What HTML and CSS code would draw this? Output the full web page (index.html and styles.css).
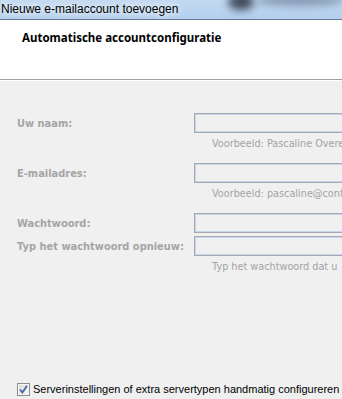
FILE: index.html
```html
<!DOCTYPE html>
<html lang="nl">
<head>
    <meta charset="UTF-8">
    <title>Nieuwe e-mailaccount toevoegen</title>
    <link rel="stylesheet" href="styles.css">
</head>
<body>
    <div class="titlebar">
        <span class="window-title">Nieuwe e-mailaccount toevoegen</span>
        <span class="blur blur-one"></span>
        <span class="blur blur-two"></span>
    </div>

    <div class="header">
        <h1>Automatische accountconfiguratie</h1>
    </div>

    <div class="form">
        <div class="row">
            <label>Uw naam:</label>
            <div class="field"></div>
        </div>
        <div class="hint">Voorbeeld: Pascaline Overe</div>

        <div class="row spaced">
            <label>E-mailadres:</label>
            <div class="field"></div>
        </div>
        <div class="hint">Voorbeeld: pascaline@cont</div>

        <div class="row spaced">
            <label>Wachtwoord:</label>
            <div class="field"></div>
        </div>
        <div class="row tight">
            <label>Typ het wachtwoord opnieuw:</label>
            <div class="field"></div>
        </div>
        <div class="hint">Typ het wachtwoord dat u</div>
    </div>

    <div class="manual">
        <span class="checkbox">
            <svg width="9" height="9" viewBox="0 0 9 9">
                <path d="M1 4.5 L3.4 7.5 L8 0.8" fill="none" stroke="#4b64a8" stroke-width="1.8"/>
            </svg>
        </span>
        <span class="manual-text">Serverinstellingen of extra servertypen handmatig configureren</span>
    </div>
</body>
</html>
```

FILE: styles.css
```css
html, body {
    margin: 0;
    padding: 0;
}
body {
    width: 342px;
    height: 399px;
    overflow: hidden;
    background: #f0f0f0;
    font-family: "Liberation Sans", sans-serif;
}
.titlebar {
    position: relative;
    height: 19px;
    background: linear-gradient(to bottom, #c4daf1, #b3cfee);
    border-bottom: 1px solid #67788f;
    overflow: hidden;
}
.window-title {
    position: relative;
    z-index: 1;
    display: block;
    font-size: 12px;
    line-height: 18px;
    color: #000;
    text-shadow: 0 0 6px #fff, 0 0 8px #fff;
    white-space: nowrap;
    margin-left: 1px;
}
.blur {
    position: absolute;
    top: -6px;
    border-radius: 50%;
    filter: blur(4px);
}
.blur-one {
    left: 228px;
    width: 26px;
    height: 16px;
    background: #3c4658;
}
.blur-two {
    left: 255px;
    width: 90px;
    height: 12px;
    background: #8296b0;
}
.header {
    background: #fff;
    height: 60px;
    border-bottom: 1px solid #a0a0a0;
    box-shadow: 0 1px 0 #fff;
    box-sizing: border-box;
    padding: 10px 0 0 22px;
}
.header h1 {
    margin: 0;
    font-family: "Noto Sans", sans-serif;
    font-size: 11.5px;
    line-height: 16px;
    font-weight: bold;
    color: #000;
    white-space: nowrap;
}
.form {
    padding-top: 33px;
}
.row {
    display: flex;
    align-items: center;
    height: 20px;
}
.row.spaced {
    margin-top: 13px;
}
.row.tight {
    margin-top: 3px;
}
.row label {
    width: 194px;
    padding-left: 17px;
    flex-shrink: 0;
    box-sizing: border-box;
    font-family: "DejaVu Sans", sans-serif;
    font-size: 9.9px;
    font-weight: bold;
    color: #a5a5a5;
    white-space: nowrap;
}
.field {
    width: 148px;
    height: 20px;
    flex-shrink: 0;
    box-sizing: border-box;
    border: 1px solid #a6a8ae;
    border-right: none;
    box-shadow: inset 1px 1px 0 #c2d6ed, inset 0 -1px 0 #c2d6ed;
    background: #f0f0f0;
}
.hint {
    padding-left: 212px;
    margin-top: 5px;
    height: 12px;
    font-family: "DejaVu Sans", sans-serif;
    font-size: 9.7px;
    line-height: 12px;
    color: #a3a3a3;
    white-space: nowrap;
}
.manual {
    display: flex;
    align-items: center;
    margin-top: 109px;
    padding-left: 17px;
    height: 14px;
}
.checkbox {
    display: flex;
    align-items: center;
    justify-content: center;
    width: 13px;
    height: 13px;
    box-sizing: border-box;
    border: 1px solid #8e8f8f;
    background: linear-gradient(135deg, #dcdcdc, #f7f7f7);
    box-shadow: inset 0 0 0 1px #f4f4f4;
}
.manual-text {
    margin-left: 3px;
    font-size: 11px;
    line-height: 14px;
    color: #000;
    white-space: nowrap;
}
```
